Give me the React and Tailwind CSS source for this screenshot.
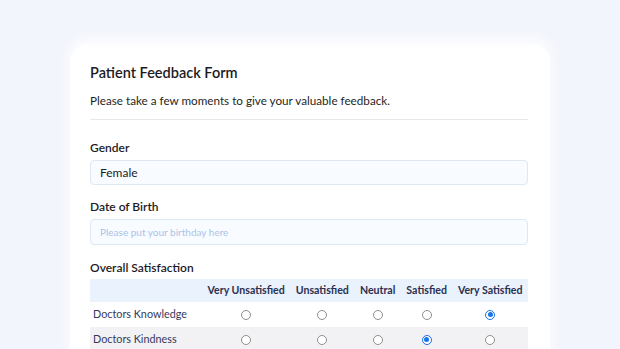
import React from "react";

const cols = ["Very Unsatisfied", "Unsatisfied", "Neutral", "Satisfied", "Very Satisfied"];
const rows = [
  { label: "Doctors Knowledge", sel: 4 },
  { label: "Doctors Kindness", sel: 3 },
];

function Radio({ on }) {
  return on ? (
    <span className="flex h-[10px] w-[10px] items-center justify-center rounded-full border-[1.5px] border-[#1a73e8] bg-white">
      <span className="h-[5px] w-[5px] rounded-full bg-[#1a73e8]" />
    </span>
  ) : (
    <span className="h-[10px] w-[10px] rounded-full border border-[#8f8f8f] bg-white" />
  );
}

export default function App() {
  return (
    <div className="h-[349px] overflow-hidden bg-[#f3f5fc] pt-[45px] font-['Lato',sans-serif]">
      <div className="mx-auto w-[480px] rounded-t-[16px] bg-white pl-5 pr-[22px] pt-[18px] pb-6 shadow-[0_-6px_14px_rgba(255,255,255,0.9)]">
        <h1 className="text-[14.5px] font-semibold leading-[20px] text-[#1b1b1f]">Patient Feedback Form</h1>
        <p className="mt-[9px] text-[11.7px] leading-[16px] text-[#1f1f24]">Please take a few moments to give your valuable feedback.</p>
        <div className="mt-[11px] h-px bg-[#e6e8ec]" />

        <div className="mt-[20px] text-[12px] font-semibold leading-[16px] text-[#1b1b1f]">Gender</div>
        <div className="mt-[4px] flex h-[25px] items-center rounded-[4px] border border-[#dfe8f2] bg-[#f8fbff] px-[9px] text-[12px] text-[#1b1b1f]">Female</div>

        <div className="mt-[14px] text-[12px] font-semibold leading-[16px] text-[#1b1b1f]">Date of Birth</div>
        <div className="mt-[4px] flex h-[26px] items-center rounded-[4px] border border-[#dfe8f2] bg-[#f8fbff] px-[9px] text-[10px] text-[#a9c4ea]">Please put your birthday here</div>

        <div className="mt-[15px] text-[12px] font-semibold leading-[16px] text-[#1b1b1f]">Overall Satisfaction</div>
        <div className="mt-[3px] grid grid-cols-[1fr_auto_auto_auto_auto_auto]">
          <div className="h-[23px] bg-[#e9f2fd]" />
          {cols.map((c) => (
            <div key={c} className="flex h-[23px] items-center justify-center whitespace-nowrap bg-[#e9f2fd] px-[5.5px] text-[10.6px] font-bold text-[#2c2f4e]">
              {c}
            </div>
          ))}
          {rows.map((r, i) => (
            <React.Fragment key={r.label}>
              <div className={`flex h-[25px] items-center pl-[3px] text-[10.8px] text-[#34385e] ${i % 2 ? "bg-[#f2f2f4]" : "bg-white"}`}>{r.label}</div>
              {cols.map((c, j) => (
                <div key={c} className={`flex h-[25px] items-center justify-center ${i % 2 ? "bg-[#f2f2f4]" : "bg-white"}`}>
                  <Radio on={j === r.sel} />
                </div>
              ))}
            </React.Fragment>
          ))}
        </div>
      </div>
    </div>
  );
}
